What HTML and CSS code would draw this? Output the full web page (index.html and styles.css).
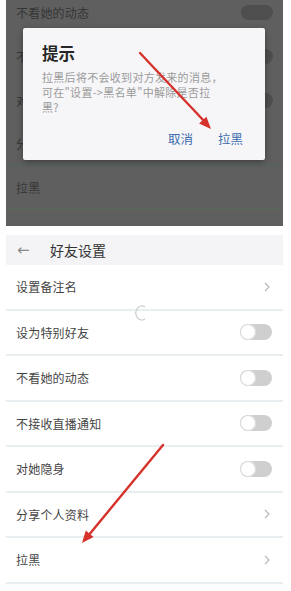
FILE: index.html
```html
<!DOCTYPE html>
<html lang="zh-CN">
<head>
<meta charset="utf-8">
<title>好友设置</title>
<link rel="stylesheet" href="styles.css">
</head>
<body>
<div class="page">
  <section class="shot-top">
    <div class="dim-list">
      <div class="dim-row"><span>不看她的动态</span><i class="dim-toggle"></i></div>
      <div class="dim-row"><span>不接收直播通知</span><i class="dim-toggle"></i></div>
      <div class="dim-row"><span>对她隐身</span><i class="dim-toggle"></i></div>
      <div class="dim-row line"><span>分享个人资料</span></div>
      <div class="dim-row line short"><span>拉黑</span></div>
    </div>
    <div class="dialog">
      <h2 class="dialog-title">提示</h2>
      <p class="dialog-text">拉黑后将不会收到对方发来的消息，<br>可在"设置-&gt;黑名单"中解除是否拉<br>黑?</p>
      <div class="dialog-actions">
        <span class="dialog-btn">取消</span>
        <span class="dialog-btn">拉黑</span>
      </div>
    </div>
  </section>

  <section class="shot-bottom">
    <header class="bar">
      <span class="back">&#8592;</span>
      <span class="bar-title">好友设置</span>
    </header>
    <ul class="list">
      <li class="row"><span>设置备注名</span><svg class="chev" viewBox="0 0 6 10"><polyline points="1,1 5,5 1,9"/></svg></li>
      <li class="row"><span>设为特别好友</span><i class="toggle"></i></li>
      <li class="row"><span>不看她的动态</span><i class="toggle"></i></li>
      <li class="row"><span>不接收直播通知</span><i class="toggle"></i></li>
      <li class="row"><span>对她隐身</span><i class="toggle"></i></li>
      <li class="row"><span>分享个人资料</span><svg class="chev" viewBox="0 0 6 10"><polyline points="1,1 5,5 1,9"/></svg></li>
      <li class="row"><span>拉黑</span><svg class="chev" viewBox="0 0 6 10"><polyline points="1,1 5,5 1,9"/></svg></li>
    </ul>
  </section>

  <svg class="spinner" viewBox="0 0 14 18"><path d="M11 3 A6 7 0 1 0 11 15"/></svg>

  <svg class="arrows" viewBox="0 0 291 591">
    <line x1="140" y1="53" x2="205" y2="122"/>
    <polygon points="211,129 199.1,123.6 206.4,116.8"/>
    <line x1="163" y1="445" x2="88" y2="536"/>
    <polygon points="82,543 85.8,530.6 93.5,536.9"/>
  </svg>
</div>
</body>
</html>
```

FILE: styles.css
```css
* { box-sizing: border-box; }
html, body { margin: 0; padding: 0; background: #ffffff; }
body { font-family: "Noto Sans CJK SC", "Noto Sans", sans-serif; }

.page {
  position: relative;
  width: 291px;
  height: 591px;
  overflow: hidden;
  background: #ffffff;
}

/* ---------- dimmed top screenshot ---------- */
.shot-top {
  position: relative;
  margin: 0 8px 0 6px;
  height: 226px;
  background: #5f5f5f;
  overflow: hidden;
}
.dim-list {
  margin-top: -10px;
}
.dim-row {
  display: flex;
  align-items: center;
  justify-content: space-between;
  height: 44px;
  padding: 0 10px;
  font-size: 12px;
  letter-spacing: 0.2px;
  color: #353535;
}
.dim-row.line { border-bottom: 2px solid #57625a; }
.dim-row.short { border-bottom-color: #5a665c; }
.dim-toggle {
  width: 32px;
  height: 15px;
  border-radius: 8px;
  background: #4e4e4e;
}

.dialog {
  position: absolute;
  left: 17px;
  top: 28px;
  width: 242px;
  height: 132px;
  background: #f6f6f8;
  border-radius: 2px;
  box-shadow: 0 2px 6px rgba(0, 0, 0, 0.35);
  padding: 13px 14px 0 19px;
}
.dialog-title {
  margin: 0;
  font-size: 16.5px;
  font-weight: 700;
  line-height: 24px;
  color: #262626;
}
.dialog-text {
  margin: 5px 0 0;
  font-size: 11px;
  line-height: 15px;
  letter-spacing: 0.3px;
  color: #9b9b9b;
  white-space: nowrap;
}
.dialog-actions {
  display: flex;
  justify-content: flex-end;
  gap: 25px;
  margin-top: 15px;
  padding-right: 8px;
}
.dialog-btn {
  font-size: 12.5px;
  line-height: 18px;
  color: #3d6cae;
}

/* ---------- bottom page ---------- */
.shot-bottom {
  margin: 9px 8px 0 6px;
}
.bar {
  display: flex;
  align-items: center;
  height: 30px;
  background: #f4f4f6;
  padding-left: 11px;
}
.back {
  font-family: "DejaVu Sans", sans-serif;
  font-size: 15px;
  color: #8a8a8a;
  width: 33px;
}
.bar-title {
  font-size: 14px;
  color: #333333;
}
.list {
  list-style: none;
  margin: 0;
  padding: 0;
}
.row {
  display: flex;
  align-items: center;
  justify-content: space-between;
  height: 45.5px;
  padding: 0 11px 0 10px;
  border-bottom: 2px solid #e9eef0;
  font-size: 12px;
  letter-spacing: 0.2px;
  color: #444444;
  background: #ffffff;
}
.toggle {
  position: relative;
  width: 32px;
  height: 16px;
  border-radius: 8px;
  background: #cfcfcf;
}
.toggle::before {
  content: "";
  position: absolute;
  left: 0;
  top: 0;
  width: 16px;
  height: 16px;
  border-radius: 50%;
  background: #ffffff;
  box-shadow: 0 0 0 1px #d6d6d6 inset;
}
.chev {
  width: 6px;
  height: 10px;
  margin-right: 2px;
  fill: none;
  stroke: #b8b8b8;
  stroke-width: 1.2;
}

/* overlays */
.spinner {
  position: absolute;
  left: 134px;
  top: 304px;
  width: 14px;
  height: 18px;
  fill: none;
  stroke: #cfcfcf;
  stroke-width: 1.3;
}
.arrows {
  position: absolute;
  left: 0;
  top: 0;
  width: 291px;
  height: 591px;
  pointer-events: none;
}
.arrows line {
  stroke: #d6322c;
  stroke-width: 2.4;
  stroke-linecap: round;
}
.arrows polygon { fill: #d6322c; }
```
